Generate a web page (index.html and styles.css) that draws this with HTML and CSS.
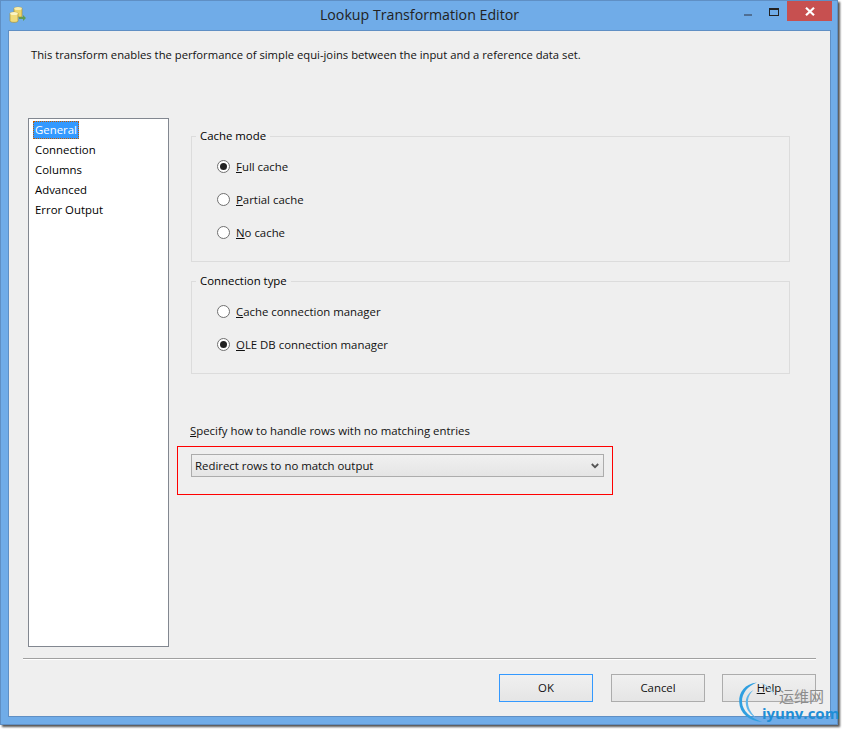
FILE: index.html
```html
<!DOCTYPE html>
<html lang="en">
<head>
<meta charset="utf-8">
<title>Lookup Transformation Editor</title>
<link rel="stylesheet" href="styles.css">
</head>
<body>
<div class="window">
  <div class="titlebar">
    <svg class="app-icon" width="18" height="18" viewBox="0 0 18 18">
      <path d="M5 2.5C5 .8 13 .8 13 2.5V11H5Z" fill="#ecd56a" stroke="#a8943c" stroke-width=".7"/>
      <ellipse cx="9" cy="2.6" rx="3.8" ry="1.5" fill="#f8eeb0"/>
      <path d="M1 7.5C1 5.8 9 5.8 9 7.5V15C9 16.8 1 16.8 1 15Z" fill="#f0dc7c" stroke="#a8943c" stroke-width=".7"/>
      <ellipse cx="5" cy="7.6" rx="3.8" ry="1.5" fill="#fbf4c4"/>
      <path d="M10 11h4V9l3 3-3 3v-2h-4Z" fill="#5f9c55"/>
    </svg>
    <div class="title">Lookup Transformation Editor</div>
    <div class="controls">
      <span class="min"></span>
      <span class="max"></span>
      <span class="close">
        <svg width="10" height="9" viewBox="0 0 10 9"><path d="M1 .8 9 8.2M9 .8 1 8.2" stroke="#fff" stroke-width="2.2" fill="none"/></svg>
      </span>
    </div>
  </div>
  <div class="client">
    <p class="desc">This transform enables the performance of simple equi-joins between the input and a reference data set.</p>
    <div class="body">
      <ul class="nav">
        <li class="selected"><span>General</span></li>
        <li><span>Connection</span></li>
        <li><span>Columns</span></li>
        <li><span>Advanced</span></li>
        <li><span>Error Output</span></li>
      </ul>
      <div class="main">
        <fieldset class="group cache">
          <legend>Cache mode</legend>
          <div class="radio"><i class="dot on"></i><span><u>F</u>ull cache</span></div>
          <div class="radio"><i class="dot"></i><span><u>P</u>artial cache</span></div>
          <div class="radio"><i class="dot"></i><span><u>N</u>o cache</span></div>
        </fieldset>
        <fieldset class="group conn">
          <legend>Connection type</legend>
          <div class="radio"><i class="dot"></i><span><u>C</u>ache connection manager</span></div>
          <div class="radio"><i class="dot on"></i><span><u>O</u>LE DB connection manager</span></div>
        </fieldset>
        <div class="specify"><u>S</u>pecify how to handle rows with no matching entries</div>
        <div class="highlight">
          <div class="combo">
            <span>Redirect rows to no match output</span>
            <svg width="8" height="6" viewBox="0 0 8 6"><path d="M.8 1 4 4.2 7.2 1" stroke="#555" stroke-width="1.8" fill="none"/></svg>
          </div>
        </div>
      </div>
    </div>
    <div class="sep"></div>
    <div class="buttons">
      <div class="btn default">OK</div>
      <div class="btn">Cancel</div>
      <div class="btn"><u>H</u>elp</div>
    </div>
  </div>
</div>
<div class="mark">
  <svg class="mark-arc" width="60" height="44" viewBox="0 0 60 44">
    <path d="M19 .6C7 2 .8 10 1.2 20 1.6 31 11 39 24 40 13 36 4.2 29 4 20 3.8 11 10 4 19 .6Z" fill="#2f9fe0"/>
    <path d="M15.5 8C10 11 7.4 16 7.8 21.5 8.2 28 12.5 33 18.7 36.4 14 32 10.4 27 10 21.5 9.7 16 11.5 12 15.5 8Z" fill="#5db5ea"/>
    <path d="M22 .7C29 2 34.500 7 37.500 14.700 33.500 8.500 28.500 4 22 .7Z" fill="#9fd3f0"/>
  </svg>
  <span class="mark-cn">运维网</span>
  <span class="mark-en">iyunv.com</span>
</div>
</body>
</html>
```
FILE: styles.css
```css
* { box-sizing: border-box; }
html, body { margin: 0; padding: 0; background: #fff; }
body {
  width: 842px; height: 729px; position: relative; overflow: hidden;
  font: 11.4px/16px "Open Sans", "Noto Sans", sans-serif; color: #000;
}
.window {
  width: 838px; height: 725px;
  background: #70ace8;
  border: 1px solid #5f8fc4;
  box-shadow: 2px 2px 2px #555;
  padding: 0 6px 7px 7px;
  display: flex; flex-direction: column;
}
.titlebar { height: 29px; flex: none; position: relative; display: flex; align-items: center; justify-content: center; }
.app-icon { position: absolute; left: 1px; top: 5px; }
.title { font-size: 14.2px; color: #222; margin-top: -1px; }
.controls { position: absolute; right: -1px; top: 0; display: flex; align-items: flex-start; }
.min { width: 8px; height: 2px; background: #4f6f94; margin: 13px 17px 0 0; }
.max { width: 10px; height: 8px; border: 1px solid #222; border-top-width: 2px; margin: 7px 8px 0 0; }
.close { width: 45px; height: 20px; background: #c75050; display: flex; align-items: center; justify-content: center; }
.client {
  flex: 1; min-height: 0; background: #efefef; border: 1px solid #5f8fc4;
  padding: 0 14px 0 14px; display: flex; flex-direction: column;
}
.desc { margin: 16px 0 0 8px; height: 16px; color: #111; font-size: 11.25px; }
.body { display: flex; margin: 55px 0 0 5px; height: 529px; flex: none; }
.nav {
  list-style: none; margin: 0; padding: 1px 0 0 4px;
  width: 141px; height: 529px; background: #fff; border: 1px solid #828790; flex: none;
}
.nav li { height: 20px; display: flex; align-items: center; }
.nav li span { padding: 0 2px; height: 18px; line-height: 18px; }
.nav .selected span { background: #3399ff; color: #fff; outline: 1px dotted #c05a00; outline-offset: -1px; }
.main { margin-left: 22px; width: 600px; }
.group { margin: 0; padding: 0; border: 1px solid #dcdcdc; border-radius: 0; position: relative; width: 599px; }
.group legend { position: absolute; left: 4px; top: -9px; background: #efefef; padding: 0 4px; line-height: 16px; }
.cache { height: 126px; margin-top: 18px; padding-top: 13px; }
.conn { height: 93px; margin-top: 19px; padding-top: 13px; }
.radio { height: 33px; padding-left: 25px; display: flex; align-items: flex-start; gap: 6px; }
.radio span { line-height: 16px; margin-top: 9px; color: #111; }
.dot {
  width: 13px; height: 13px; border-radius: 50%; background: #fff; border: 1px solid #707070;
  margin-top: 10px; display: flex; align-items: center; justify-content: center; flex: none;
}
.dot.on::after { content: ""; width: 7px; height: 7px; border-radius: 50%; background: #222; }
.specify { margin-top: 49px; height: 16px; color: #111; margin-left: -1px; }
.highlight {
  width: 436px; height: 49px; margin: 7px 0 0 -14px; border: 1px solid #f00; padding: 7px 0 0 13px;
}
.combo {
  width: 413px; height: 23px; border: 1px solid #acacac;
  background: linear-gradient(#f0f0f0, #e5e5e5);
  display: flex; align-items: center; justify-content: space-between; padding: 0 4px 0 3px; color: #111;
}
.sep { height: 2px; background: linear-gradient(#a0a0a0 50%, #fff 50%); margin: 11px 0 0 0; flex: none; }
.buttons { display: flex; justify-content: flex-end; gap: 17px; margin-top: 14px; }
.btn {
  width: 94px; height: 28px; border: 1px solid #acacac;
  background: linear-gradient(#f0f0f0, #e5e5e5);
  display: flex; align-items: center; justify-content: center; color: #111;
}
.btn.default { border-color: #3399ff; margin-right: 1px; }
.mark { position: absolute; left: 738px; top: 682px; width: 104px; height: 47px; }
.mark-arc { position: absolute; left: 0; top: 0; }
.mark-cn { position: absolute; left: 41px; top: 5px; font: 15px/18px "Noto Sans CJK SC", sans-serif; color: #8c8c8c; letter-spacing: 0; }
.mark-en { position: absolute; left: 24px; top: 21px; font: bold 15px/20px "Open Sans", sans-serif; color: #1f8ed6; }
```
